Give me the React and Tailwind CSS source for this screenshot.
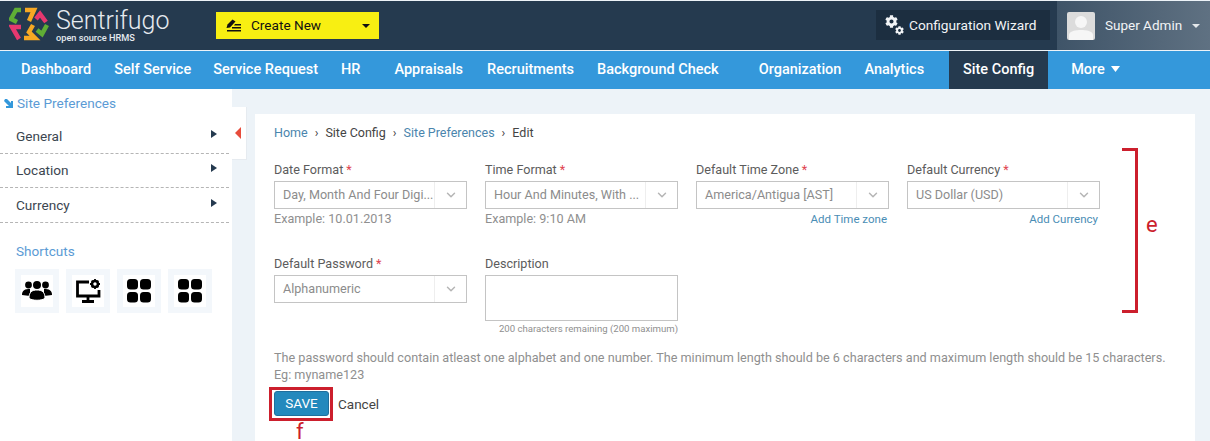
import React from "react";
import { ChevronDown } from "lucide-react";
import { FaCog } from "react-icons/fa";

const font = "font-['Roboto','Liberation_Sans',sans-serif]";
const nav = [
  ["Dashboard", "ml-[21px]"],
  ["Self Service", "ml-[23px]"],
  ["Service Request", "ml-[22px]"],
  ["HR", "ml-[23px]"],
  ["Appraisals", "ml-[34px]"],
  ["Recruitments", "ml-[24px]"],
  ["Background Check", "ml-[23px]"],
  ["Organization", "ml-[40px]"],
  ["Analytics", "ml-[23px]"],
];

function Down({ w = 8, h = 4, className = "" }) {
  return (
    <svg width={w} height={h} viewBox="0 0 8 4" preserveAspectRatio="none" className={className} fill="currentColor">
      <path d="M0 0 H8 L4 4 Z" />
    </svg>
  );
}

function Right() {
  return (
    <svg width="6" height="8" viewBox="0 0 6 8" className="ml-auto -mt-[4px]" fill="#253a4f">
      <path d="M0 0 L6 4 L0 8 Z" />
    </svg>
  );
}

function Logo() {
  return (
    <svg width="40" height="38" viewBox="9 6 40 38" className="shrink-0" fill="none" strokeWidth="4.5" strokeLinejoin="miter">
      <path d="M21 11 H16 L11 20 L17 23" stroke="#5fae35" />
      <path d="M25 11 H34 L29 22" stroke="#f7a823" />
      <path d="M36 20 L40 15 L46 23" stroke="#e6386f" />
      <path d="M47 26 L42 35 L37 31" stroke="#5fae35" />
      <path d="M33 26 L29 33 L35 39 H24" stroke="#f7a823" />
      <path d="M21 28 H12 L19 40" stroke="#e6386f" />
    </svg>
  );
}

function Grid() {
  return (
    <svg width="24" height="24" viewBox="0 0 24 24" fill="#000">
      <rect x="0" y="0" width="11" height="10.5" rx="3.5" />
      <rect x="13" y="0" width="11" height="10.5" rx="3.5" />
      <rect x="0" y="13" width="11" height="10.5" rx="3.5" />
      <rect x="13" y="13" width="11" height="10.5" rx="3.5" />
    </svg>
  );
}

function Users() {
  return (
    <svg width="30" height="20" viewBox="0 0 30 20" fill="#000">
      <circle cx="6.5" cy="4" r="3.4" />
      <circle cx="23.5" cy="4" r="3.4" />
      <circle cx="15" cy="4" r="4" />
      <path d="M0 14 C0 9 3 8 8 8 L8 15 Z" />
      <path d="M30 14 C30 9 27 8 22 8 L22 15 Z" />
      <path d="M7 17 C7 11 10 9 15 9 C20 9 23 11 23 17 C21 20 9 20 7 17 Z" stroke="#fff" strokeWidth="1" />
    </svg>
  );
}

function Monitor() {
  return (
    <svg width="25" height="24" viewBox="0 0 25 24" fill="none">
      <path d="M13 3 H1.5 V17 H23 V11" stroke="#000" strokeWidth="2.8" />
      <path d="M12 17 V22 M6 22.5 H18" stroke="#000" strokeWidth="2.8" />
      <circle cx="19" cy="5" r="3" stroke="#000" strokeWidth="2.6" />
      <path d="M19 0 V2 M19 8 V10 M14 5 H16 M22 5 H24 M15.6 1.6 L17 3 M22.4 1.6 L21 3 M15.6 8.4 L17 7 M22.4 8.4 L21 7" stroke="#000" strokeWidth="1.8" />
    </svg>
  );
}

function Shortcut({ children }) {
  return (
    <div className="w-[44px] h-[44px] border-[6px] border-[#f3f7fb] bg-white flex items-center justify-center">
      {children}
    </div>
  );
}

function Field({ label, value, hint, link }) {
  return (
    <div className="w-[193px]">
      <div className="text-[12.6px] leading-[16px] text-[#5c5c5c] h-[16px] whitespace-nowrap">
        {label}
        <span className="text-[#e0434f] ml-[3px]">*</span>
      </div>
      <div className="mt-[3px] h-[28px] border border-[#c4c4c4] flex items-center bg-white">
        <span className="flex-1 min-w-0 pl-[8px] text-[12.6px] text-[#8c8c8c] whitespace-nowrap">{value}</span>
        <span className="w-[32px] h-full border-l border-[#eeeeee] flex items-center justify-center shrink-0">
          <ChevronDown size={14} strokeWidth={2.5} color="#b5b5b5" />
        </span>
      </div>
      {hint && <div className="mt-[2px] text-[12.6px] leading-[16px] text-[#8f8f8f]">{hint}</div>}
      {link && <div className="mt-[2px] pr-[2px] text-right text-[11.5px] leading-[16px] text-[#4a8db5]">{link}</div>}
    </div>
  );
}

export default function App() {
  return (
    <div className={`w-[1210px] h-[441px] overflow-hidden bg-[#edf3f8] flex flex-col relative ${font}`}>
      <header className="mt-[1px] h-[49px] shrink-0 bg-[#253a4f] flex items-stretch">
        <div className="w-[216px] shrink-0 pl-[9px] pt-[4px] flex">
          <Logo />
          <div className="ml-[7px] text-[#e6ebef] leading-none">
            <div className="text-[25px] leading-[28px] font-light mt-[2px]">Sentrifugo</div>
            <div className="text-[9.2px] leading-[10px] font-medium -mt-[2px] whitespace-nowrap">open source HRMS</div>
          </div>
        </div>
        <div className="mt-[11px] w-[163px] h-[27px] bg-[#f8ef12] flex items-center text-[#111] text-[13.6px]">
          <svg width="16" height="14" viewBox="0 0 16 14" className="ml-[10px]" fill="#111">
            <path d="M0.5 9 L1.5 5.5 L6.5 0.5 L9.5 2.5 L4 8.5 Z" />
            <path d="M9 5 H15 V6.5 H8 Z M6 8 H15 V9.5 H6 Z M1 11 H15 V12.5 H1 Z" />
          </svg>
          <span className="ml-[9px]">Create New</span>
          <Down className="ml-auto mr-[9px]" />
        </div>
        <div className="ml-auto mr-[7px] mt-[9px] w-[174px] h-[30px] bg-[#1c2e40] flex items-center text-[#f2f4f6] text-[13.7px]">
          <span className="relative w-[19px] h-[20px] ml-[9px] block">
            <FaCog size={13} className="absolute left-0 top-0" />
            <FaCog size={9} className="absolute right-0 bottom-0" />
          </span>
          <span className="ml-[5px] whitespace-nowrap">Configuration Wizard</span>
        </div>
        <div className="w-[153px] bg-gradient-to-r from-[#3f5468] to-[#5f7182] flex items-center text-[#f2f4f6] text-[13.5px]">
          <span className="ml-[10px] w-[28px] h-[28px] bg-[#dcdcdc] rounded-[2px] overflow-hidden block">
            <svg width="28" height="28" viewBox="0 0 28 28" fill="#f6f6f6">
              <circle cx="14" cy="10" r="6" />
              <path d="M2 28 V23 C2 19 9 18 14 18 C19 18 26 19 26 23 V28 Z" />
            </svg>
          </span>
          <span className="ml-[10px] whitespace-nowrap">Super Admin</span>
          <Down className="ml-[10px] text-[#e4e8eb]" />
        </div>
      </header>
      <nav className="mt-[1px] h-[38px] shrink-0 bg-[#3498db] flex items-stretch text-white text-[14.5px] font-medium">
        {nav.map(([t, m]) => (
          <div key={t} className={`${m} pb-[1px] flex items-center whitespace-nowrap`}>{t}</div>
        ))}
        <div className="ml-[25px] w-[99px] pb-[1px] bg-[#253a4f] flex items-center justify-center">Site Config</div>
        <div className="ml-[23px] pb-[1px] flex items-center gap-[6px]">More <Down w={9} h={6} className="-mt-[1px]" /></div>
      </nav>
      <div className="flex-1 flex min-h-0 items-stretch">
        <aside className="w-[232px] shrink-0 bg-white relative">
          <div className="h-[28px] flex items-center pl-[4px] text-[13.6px] text-[#5b9bd5]">
            <svg width="9" height="9" viewBox="0 0 9 9" fill="#3498db" className="mt-[1px]">
              <path d="M1 0 L3 0 L7 4 V2 H9 V9 H2 V7 H5 L0 2 Z" />
            </svg>
            <span className="ml-[4px]">Site Preferences</span>
          </div>
          {["General", "Location", "Currency"].map((t, i) => (
            <div key={t} className={`mr-[3px] h-[34.5px] ${i === 0 ? "mt-[2px]" : ""} border-b border-dashed border-[#b5b5b5] flex items-center pl-[16px] pr-[12px] text-[13.6px] text-[#3c4650]`}>
              <span>{t}</span>
              <Right />
            </div>
          ))}
          <div className="mt-[20px] ml-[16px] text-[13.6px] leading-[16px] text-[#5b9bd5]">Shortcuts</div>
          <div className="mt-[10px] ml-[15px] flex gap-[7px]">
            <Shortcut><Users /></Shortcut>
            <Shortcut><Monitor /></Shortcut>
            <Shortcut><Grid /></Shortcut>
            <Shortcut><Grid /></Shortcut>
          </div>
        </aside>
        <div className="w-[15px] h-[53px] mt-[18px] bg-white shrink-0 flex items-center border-r border-b border-[#e6ebf0]">
          <svg width="6" height="12" viewBox="0 0 6 12" fill="#e74c3c" className="ml-[3px]">
            <path d="M6 0 V12 L0 6 Z" />
          </svg>
        </div>
        <main className="ml-[8px] mt-[25px] w-[940px] bg-white pl-[19px] pr-[20px]">
          <div className="mt-[11px] h-[16px] text-[12.5px] leading-[16px] flex items-center text-[#444]">
            <span className="text-[#4a85ad]">Home</span>
            <span className="mx-[7px]">›</span>
            <span>Site Config</span>
            <span className="mx-[7px]">›</span>
            <span className="text-[#4a85ad]">Site Preferences</span>
            <span className="mx-[7px]">›</span>
            <span>Edit</span>
          </div>
          <div className="mt-[21px] flex gap-[18px] h-[86px]">
            <Field label="Date Format" value="Day, Month And Four Digi..." hint="Example: 10.01.2013" />
            <Field label="Time Format" value="Hour And Minutes, With ..." hint="Example: 9:10 AM" />
            <Field label="Default Time Zone" value="America/Antigua [AST]" link="Add Time zone" />
            <Field label="Default Currency" value="US Dollar (USD)" link="Add Currency" />
          </div>
          <div className="mt-[8px] flex gap-[18px]">
            <Field label="Default Password" value="Alphanumeric" />
            <div className="w-[193px]">
              <div className="text-[12.6px] leading-[16px] text-[#5c5c5c]">Description</div>
              <div className="mt-[3px] h-[46px] border border-[#c4c4c4]" />
              <div className="text-right text-[9.6px] leading-[13px] mt-[1px] text-[#8f8f8f] whitespace-nowrap">200 characters remaining (200 maximum)</div>
            </div>
          </div>
          <div className="mt-[14px] text-[12.63px] leading-[17px] text-[#8f8f8f] whitespace-nowrap">
            The password should contain atleast one alphabet and one number. The minimum length should be 6 characters and maximum length should be 15 characters.
            <br />
            Eg: myname123
          </div>
          <div className="mt-[4px] flex items-center">
            <div className="-ml-[5px] border-[3px] border-[#cc1f2d] pl-[2px] pr-[1px] pt-[1px] pb-[2px]">
              <div className="w-[55px] h-[25px] rounded-[3px] bg-[#2389bd] border border-[#1f6f9c] text-white text-[13.5px] flex items-center justify-center">SAVE</div>
            </div>
            <span className="ml-[5px] text-[13.5px] text-[#444]">Cancel</span>
          </div>
        </main>
      </div>
      <div className="absolute left-[1122px] top-[148px] w-[16px] h-[165px] border-[3px] border-l-0 border-[#cc1f2d]" />
      <span className="absolute left-[1146px] top-[211px] text-[22px] leading-[28px] text-[#cc1f2d]">e</span>
      <span className="absolute left-[296px] top-[422px] text-[22px] leading-[19px] text-[#cc1f2d]">f</span>
    </div>
  );
}
